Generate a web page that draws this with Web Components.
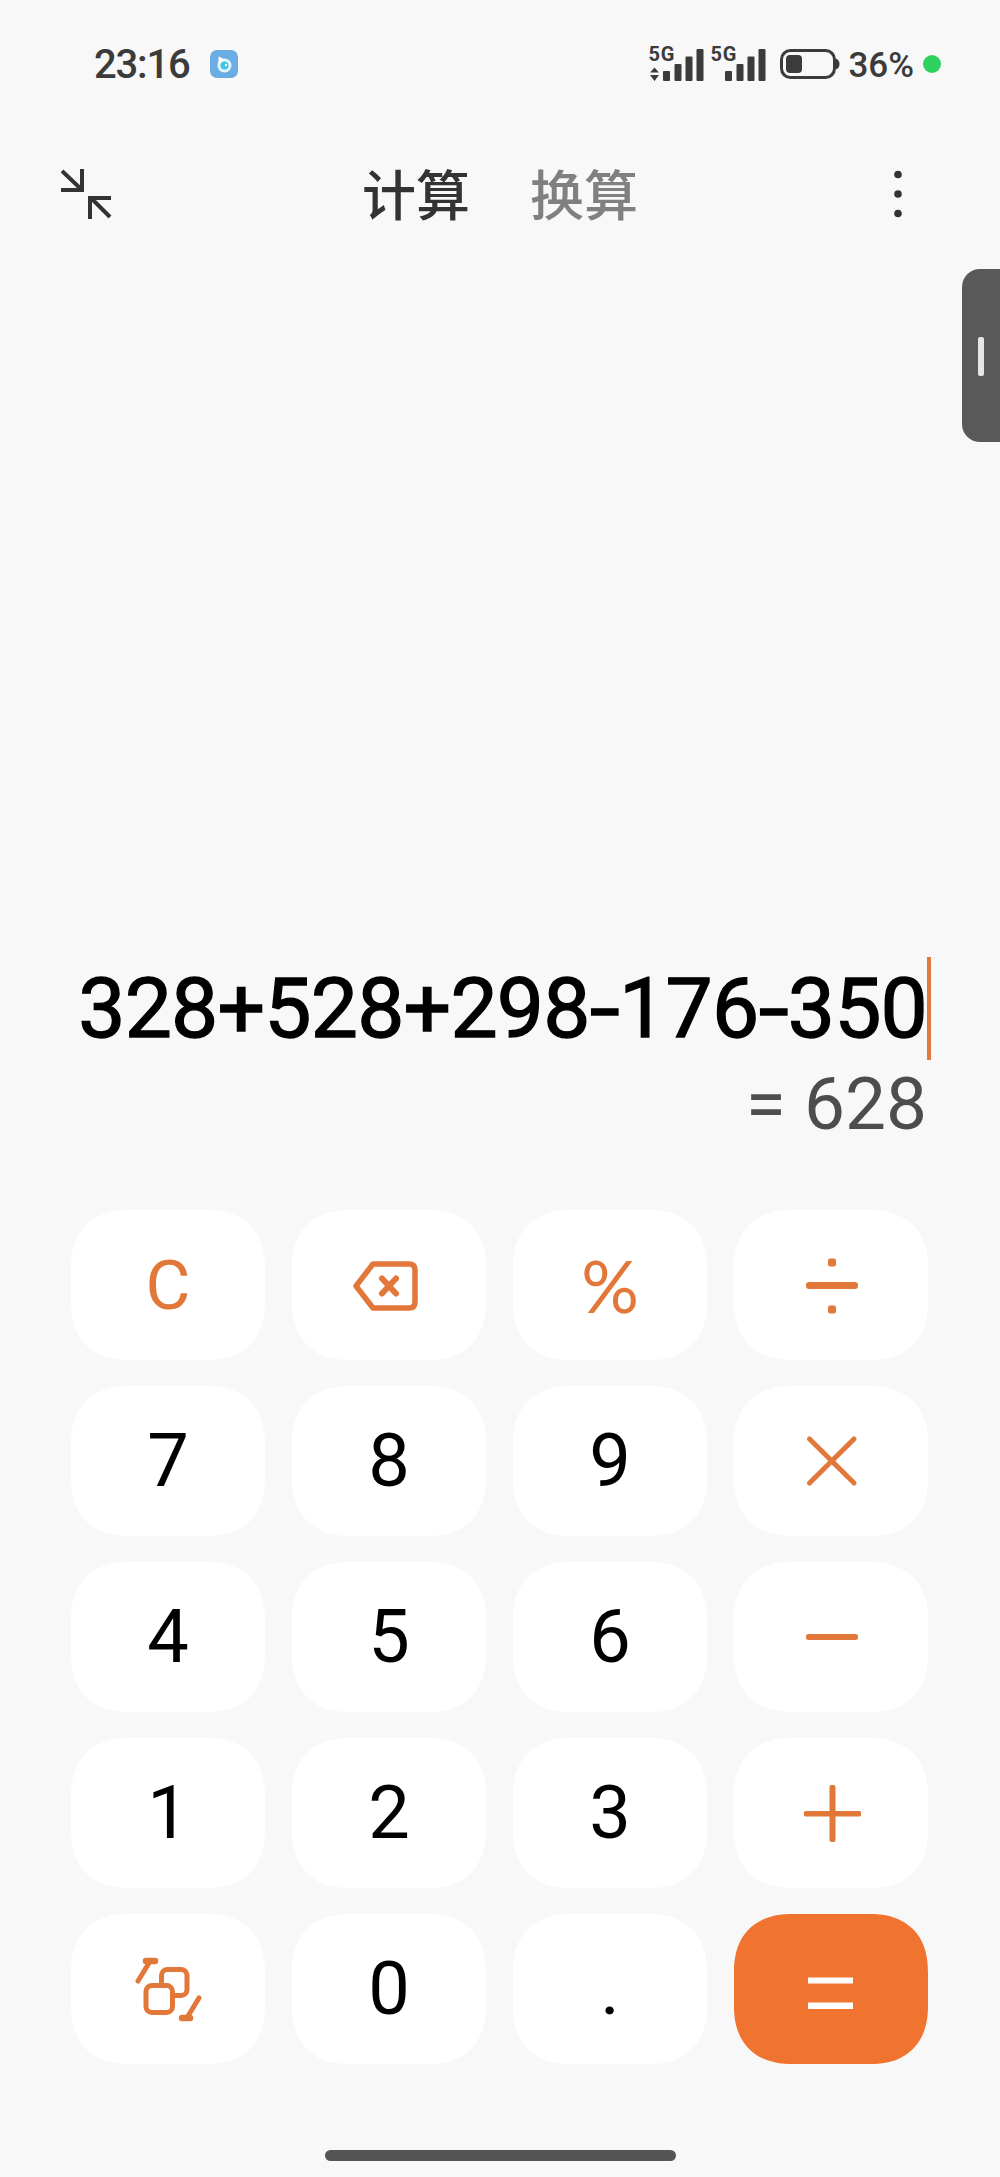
<!DOCTYPE html>
<html lang="zh"><head><meta charset="utf-8"><title>计算器</title>
<style>
html,body{margin:0;padding:0;background:#f8f8f8}
body{font-family:Roboto,"Noto Sans CJK SC",sans-serif}
</style></head><body>
<calc-app>
  <status-bar></status-bar>
  <top-bar></top-bar>
  <calc-display expr="328+528+298-176-350" result="= 628"></calc-display>
  <calc-keypad>
    <calc-key kind="fn">C</calc-key>
    <calc-key kind="fn" label="退格"><svg width="80" height="80" viewBox="0 0 80 80" fill="none" stroke="currentColor" stroke-width="5.5" stroke-linejoin="round" stroke-linecap="round"><path d="M7 41 24 19H60Q66 19 66 25V57Q66 63 60 63H24Z"/><path d="M33 33.500 47 48.500M47 33.500 33 48.500" stroke-width="6"/></svg></calc-key>
    <calc-key kind="pct">%</calc-key>
    <calc-key kind="fn" label="÷"><svg width="80" height="80" viewBox="0 0 80 80" fill="currentColor"><rect x="15" y="37" width="52" height="7" rx="3"/><rect x="37" y="13.500" width="8" height="8" rx="2"/><rect x="37" y="60.500" width="8" height="8" rx="2"/></svg></calc-key>
    <calc-key>7</calc-key><calc-key>8</calc-key><calc-key>9</calc-key>
    <calc-key kind="fn" label="×"><svg width="80" height="80" viewBox="0 0 80 80" fill="none" stroke="currentColor" stroke-width="5" stroke-linecap="round"><path d="M18.500 18 63 62M63 18 18.500 62"/></svg></calc-key>
    <calc-key>4</calc-key><calc-key>5</calc-key><calc-key>6</calc-key>
    <calc-key kind="fn" label="−"><svg width="80" height="80" viewBox="0 0 80 80" fill="currentColor"><rect x="15" y="37" width="52" height="6" rx="2.500"/></svg></calc-key>
    <calc-key>1</calc-key><calc-key>2</calc-key><calc-key>3</calc-key>
    <calc-key kind="fn" label="+"><svg width="80" height="80" viewBox="0 0 80 80" fill="currentColor"><rect x="13" y="38" width="57" height="5.500" rx="1.500"/><rect x="38.500" y="12" width="6" height="57" rx="2"/></svg></calc-key>
    <calc-key kind="fn" label="切换"><svg width="80" height="80" viewBox="0 0 80 80" fill="none" stroke="currentColor" stroke-width="5" stroke-linecap="round" stroke-linejoin="round"><rect x="33.500" y="20.500" width="25.500" height="26" rx="6"/><rect x="18" y="36.500" width="26.500" height="27" rx="6" fill="#fff"/><path d="M10 32 21 14"/><path d="M18 12H27" stroke-width="6.500"/><path d="M71 49 60 67"/><path d="M62 69H54" stroke-width="6.500"/></svg></calc-key>
    <calc-key>0</calc-key><calc-key>.</calc-key>
    <calc-key kind="eq" label="="><svg width="80" height="80" viewBox="0 0 80 80" fill="#fff"><rect x="17" y="28.500" width="45" height="6"/><rect x="17" y="53.500" width="45" height="6.500"/></svg></calc-key>
  </calc-keypad>
  <home-bar></home-bar>
  <side-handle></side-handle>
</calc-app>
<script>
function def(name, css, html, extra){
  customElements.define(name, class extends HTMLElement{
    constructor(){super();const r=this.attachShadow({mode:'open'});
      r.innerHTML='<style>'+css+'</style>'+(typeof html==='function'?html(this):html);}
    connectedCallback(){ if(extra) extra(this); }
  });
}
def('calc-app',`:host{display:flex;flex-direction:column;position:relative;height:2177px;width:1000px;overflow:hidden;background:#f8f8f8}`,`<slot></slot>`);

def('signal-icon',`:host{display:block;width:59px;height:42px}svg{display:block}text{font:700 20px Roboto,sans-serif;fill:#3b3b3b}`,
 ``,
 el=>{const arrows=el.hasAttribute('arrows');
  el.shadowRoot.innerHTML+=`<svg width="59" height="42" viewBox="-2 -6 59 42" fill="#3b3b3b"><text x="-0.500" y="14.500" textLength="26">5G</text>`+
  (arrows?`<path d="M5.500 21.500 10 26.500H1ZM1 29H10L5.500 35Z"/>`:'')+
  `<rect x="14" y="25" width="7" height="10" rx="1"/><rect x="25.500" y="18" width="7" height="17" rx="1"/><rect x="36.500" y="10.500" width="7" height="24.500" rx="1"/><rect x="47.500" y="3" width="7" height="32" rx="1"/></svg>`;});

def('status-bar',`:host{display:flex;align-items:center;justify-content:space-between;height:128px;padding:0 59px 0 94px;box-sizing:border-box;color:#3b3b3b;font-family:Roboto,sans-serif}
.l,.r{display:flex;align-items:center}
.t{font-size:40px;font-weight:500;letter-spacing:-1.2px;line-height:1;margin-top:2px}
.app{margin-left:20px;width:28px;height:28px;border-radius:7px;background:#6cace4;display:block}
.sig{display:flex;gap:3px;margin-bottom:6px;margin-right:12px}
.b{display:block;margin-right:8px}
.p{font-size:35px;font-weight:500;letter-spacing:0;line-height:1;margin-right:9px;margin-top:2px}
.d{width:18px;height:18px;border-radius:50%;background:#2fd160}`,
`<div class="l"><span class="t">23:16</span><svg class="app" viewBox="0 0 28 28"><circle cx="14.500" cy="15.500" r="7" fill="#dff6fb"/><path d="M8.500 6.500 13 8.500V14H8.500Z" fill="#fff"/><circle cx="14.500" cy="15.500" r="4" fill="#3fc4e4"/><circle cx="16" cy="15" r="1.200" fill="#fff"/></svg></div>
<div class="r"><div class="sig"><signal-icon arrows></signal-icon><signal-icon></signal-icon></div>
<svg class="b" width="60" height="30" viewBox="0 0 60 30" fill="none"><rect x="1.500" y="1.500" width="53" height="27" rx="9" stroke="#3b3b3b" stroke-width="3"/><rect x="6" y="6" width="16" height="18" rx="4" fill="#3b3b3b"/><path d="M56 9.500Q59.500 11 59.500 15T56 20.500Z" fill="#3b3b3b"/></svg>
<span class="p">36%</span><span class="d"></span></div>`);

def('top-bar',`:host{display:grid;grid-template-columns:1fr auto 1fr;align-items:center;height:132px;padding:0 61px;box-sizing:border-box}
.tabs{display:flex;gap:60px;font:500 54px "Noto Sans CJK SC",sans-serif;line-height:1;margin-top:-2px}
.a{color:#333}.i{color:#808080}
svg{display:block}.m{justify-self:end;margin-right:37px}`,
`<svg width="51" height="51" viewBox="0 0 51 51" fill="none" stroke="#333" stroke-width="4"><path d="M1 2 20 20M21 0V21H0"/><path d="M30 29 49 48M29 50V29H50"/></svg>
<div class="tabs"><span class="a">计算</span><span class="i">换算</span></div>
<svg class="m" width="8" height="48" viewBox="0 0 8 48" fill="#333"><circle cx="4" cy="4.500" r="3.800"/><circle cx="4" cy="24" r="3.800"/><circle cx="4" cy="43.500" r="3.800"/></svg>`);

def('calc-display',`:host{flex:1;display:flex;flex-direction:column;align-items:flex-end;justify-content:flex-end;padding:0 73px 64px 0;font-family:Roboto,sans-serif}
.e{position:relative;font-size:84px;font-weight:400;-webkit-text-stroke:1.3px #000;line-height:110px;color:#000;letter-spacing:-.8px;white-space:nowrap}
.e i{display:inline-block;font-style:normal;transform:scaleX(1.3);margin:0 3.5px}
.e::after{content:"";position:absolute;right:-4px;top:3px;height:103px;width:4px;background:#e07a3c}
.r{font-size:73px;font-weight:400;line-height:84px;margin-top:-2px;color:#4d4d4d;white-space:pre}`,
el=>`<div class="e">${el.getAttribute('expr').replace(/-/g,'<i>-</i>')}</div><div class="r">${el.getAttribute('result')}</div>`);

def('calc-keypad',`:host{display:grid;grid-template-columns:repeat(4,194px);grid-auto-rows:150px;column-gap:27px;row-gap:26px;padding:0 71px}`,`<slot></slot>`);

def('calc-key',`:host{display:flex;align-items:center;justify-content:center;background:#fff;border-radius:58px;corner-shape:superellipse(1.2);font-family:Roboto,sans-serif;font-size:74px;font-weight:400;color:#000;line-height:1}
:host([kind=fn]){color:#e2773a;font-size:69px}
:host([kind=pct]){color:#e2773a;font-family:Lato,sans-serif;font-size:72px}
:host([kind=eq]){background:#f0742f}
svg,::slotted(svg){display:block}`,`<slot></slot>`,
el=>{if(el.hasAttribute('label'))el.setAttribute('aria-label',el.getAttribute('label'));});

def('home-bar',`:host{display:block;padding:86px 0 16px}
div{width:351px;height:11px;border-radius:6px;background:#555;margin:0 auto}`,`<div></div>`);

def('side-handle',`:host{position:absolute;right:0;top:269px;width:38px;height:173px;background:#595959;border-radius:18px 0 0 18px;display:block}
div{position:absolute;left:16px;top:68px;width:6px;height:39px;border-radius:2px;background:#e6e6e6}`,`<div></div>`);
</script>
</body></html>
